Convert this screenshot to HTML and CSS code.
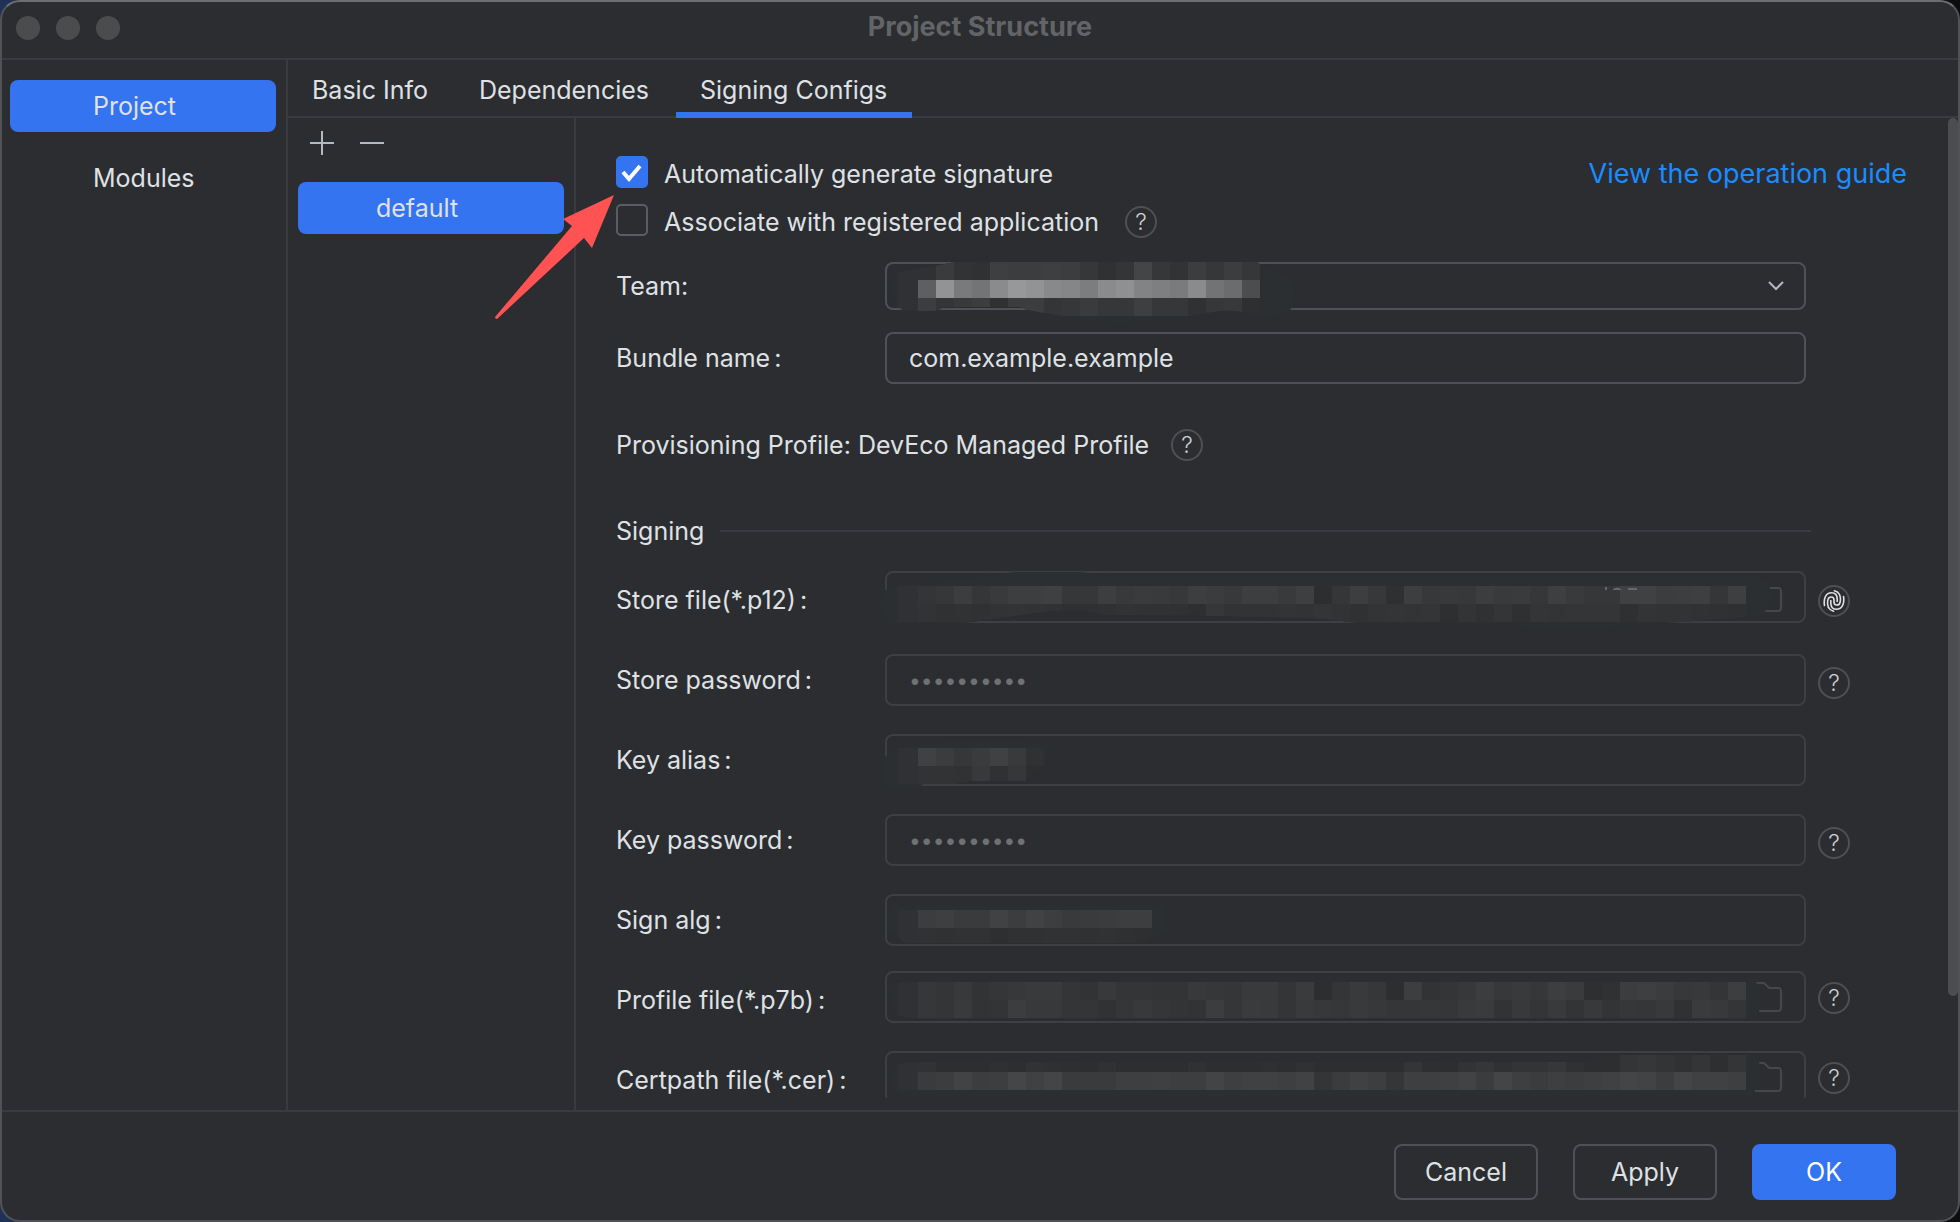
FILE: index.html
```
<!DOCTYPE html>
<html lang="en">
<head>
    <meta charset="UTF-8">
    <meta name="viewport" content="width=device-width, initial-scale=1.0">
    <title>Project Structure</title>
    <link rel="stylesheet" href="styles.css">
</head>
<body>
    <div class="window">
        <header class="titlebar">
            <div class="lights"><span></span><span></span><span></span></div>
            <h1>Project Structure</h1>
        </header>

        <div class="container">
            <nav class="sidebar">
                <button class="nav-item active">Project</button>
                <button class="nav-item">Modules</button>
            </nav>

            <main class="main">
                <div class="tabs">
                    <button class="tab">Basic Info</button>
                    <button class="tab">Dependencies</button>
                    <button class="tab active">Signing Configs</button>
                </div>

                <div class="panes">
                    <div class="config-list">
                        <div class="toolbar">
                            <button class="icon-btn" aria-label="Add">
                                <svg width="24" height="24" viewBox="0 0 24 24"><path d="M12 0v24M0 12h24"/></svg>
                            </button>
                            <button class="icon-btn" aria-label="Remove">
                                <svg width="24" height="24" viewBox="0 0 24 24"><path d="M0 12h24"/></svg>
                            </button>
                        </div>
                        <button class="config active">default</button>
                    </div>

                    <div class="content">
                        <form class="form">
                            <div class="check-row">
                                <input type="checkbox" id="autoSign" checked>
                                <label for="autoSign">Automatically generate signature</label>
                                <a class="guide" href="#">View the operation guide</a>
                            </div>
                            <div class="check-row">
                                <input type="checkbox" id="associate">
                                <label for="associate">Associate with registered application</label>
                                <button type="button" class="help" aria-label="Help">?</button>
                            </div>

                            <div class="row row-team">
                                <label for="team">Team:</label>
                                <div class="field">
                                    <select id="team"><option></option></select>
                                    <svg class="chevron" width="16" height="10" viewBox="0 0 16 10"><path d="M1 1l7 7 7-7"/></svg>
                                    <svg class="mosaic" data-mosaic="team"></svg>
                                </div>
                            </div>
                            <div class="row row-bundle">
                                <label for="bundle">Bundle name<span class="colon">:</span></label>
                                <div class="field">
                                    <input type="text" id="bundle" value="com.example.example">
                                </div>
                            </div>

                            <div class="profile">
                                <span>Provisioning Profile: DevEco Managed Profile</span>
                                <button type="button" class="help" aria-label="Help">?</button>
                            </div>

                            <h2 class="section">Signing</h2>

                            <div class="row row-file">
                                <label for="storeFile">Store file(*.p12)<span class="colon">:</span></label>
                                <div class="field">
                                    <input type="text" id="storeFile" disabled>
                                    <svg class="folder" width="30" height="30" viewBox="0 0 30 30"><path d="M1 4q0-3 3-3h8l5 5h9q3 0 3 3v17q0 3-3 3H4q-3 0-3-3z"/></svg>
                                    <svg class="mosaic" data-mosaic="store"></svg>
                                </div>
                                <button type="button" class="fingerprint" aria-label="Generate key">
                                    <svg width="22" height="22" viewBox="0 0 22 22">
                                        <path d="M5.500 17.500C4.500 15 4.300 12 5 9.500 5.800 6 11 6 11 10v2c0 4 5.200 4 6 .5.700-2.500.5-5.500-.5-8C15.500 2.500 14 1.500 11.500.8"/>
                                        <path d="M1.500 15.500C.3 8 3 2.700 8.500 2.700c4 0 5.700 3 5.700 6.300v2.500"/>
                                        <path d="M20.500 6.500C21.700 14 19 19.300 13.500 19.300c-4 0-5.700-3-5.700-6.300v-2.500"/>
                                        <path d="M5.500 17.500c1 2 2.500 3 5 3.700"/>
                                    </svg>
                                </button>
                            </div>
                            <div class="row">
                                <label for="storePassword">Store password<span class="colon">:</span></label>
                                <div class="field">
                                    <input type="password" id="storePassword" value="0123456789" disabled>
                                </div>
                                <button type="button" class="help" aria-label="Help">?</button>
                            </div>
                            <div class="row">
                                <label for="keyAlias">Key alias<span class="colon">:</span></label>
                                <div class="field">
                                    <input type="text" id="keyAlias" disabled>
                                    <svg class="mosaic" data-mosaic="alias"></svg>
                                </div>
                            </div>
                            <div class="row">
                                <label for="keyPassword">Key password<span class="colon">:</span></label>
                                <div class="field">
                                    <input type="password" id="keyPassword" value="0123456789" disabled>
                                </div>
                                <button type="button" class="help" aria-label="Help">?</button>
                            </div>
                            <div class="row">
                                <label for="signAlg">Sign alg<span class="colon">:</span></label>
                                <div class="field">
                                    <input type="text" id="signAlg" disabled>
                                    <svg class="mosaic" data-mosaic="alg"></svg>
                                </div>
                            </div>
                            <div class="row row-file">
                                <label for="profileFile">Profile file(*.p7b)<span class="colon">:</span></label>
                                <div class="field">
                                    <input type="text" id="profileFile" disabled>
                                    <svg class="folder" width="30" height="30" viewBox="0 0 30 30"><path d="M1 4q0-3 3-3h8l5 5h9q3 0 3 3v17q0 3-3 3H4q-3 0-3-3z"/></svg>
                                    <svg class="mosaic" data-mosaic="profile"></svg>
                                </div>
                                <button type="button" class="help" aria-label="Help">?</button>
                            </div>
                            <div class="row row-file">
                                <label for="certFile">Certpath file(*.cer)<span class="colon">:</span></label>
                                <div class="field">
                                    <input type="text" id="certFile" disabled>
                                    <svg class="folder" width="30" height="30" viewBox="0 0 30 30"><path d="M1 4q0-3 3-3h8l5 5h9q3 0 3 3v17q0 3-3 3H4q-3 0-3-3z"/></svg>
                                    <svg class="mosaic" data-mosaic="cert"></svg>
                                </div>
                                <button type="button" class="help" aria-label="Help">?</button>
                            </div>
                        </form>
                    </div>
                    <div class="scrollbar"></div>
                </div>

                <svg class="arrow" width="122" height="128" viewBox="0 0 122 128">
                    <path d="M120 2L69 26l9 7L1 124q0 2 2 2L90 45l8 10z"/>
                </svg>
            </main>
        </div>

        <footer class="footer">
            <button class="btn">Cancel</button>
            <button class="btn">Apply</button>
            <button class="btn primary">OK</button>
        </footer>
    </div>

    <script>
        // Redacted values: a smear shape, then rows of grey blocks clipped to it
        const mosaics = {
            team: {
                smear: 'M5 28Q6 12 18 9L55 3Q70-1 90-1H370Q385 10 405 16Q412 30 410 38L405 49Q390 55 375 54Q350 46 328 50Q290 58 258 60Q225 62 205 59Q165 52 142 48L136 45H60L50 49H35L18 48Q6 42 5 28Z',
                rows: [
                    [0, [48, 58, 50, 48, 62, 60, 60, 62, 60, 54, 48, 52, 68, 54, 50, 60, 54, 60, 54]],
                    [18, [94, 146, 121, 115, 138, 151, 146, 136, 133, 124, 138, 143, 130, 126, 122, 138, 114, 107, 76]],
                    [36, [60, 52, 56, 60, 48, 60, 60, 52, 54, 58, 54, 54, 62, 54, 54, 48, 54, 56, 46]]
                ]
            },
            store: {
                smear: 'M-4 28Q-4 18 12 15Q80 8 130 1H195L225 5H868Q886 8 887 26Q886 42 868 46L780 52Q700 60 640 56L590 53H480L440 48Q330 44 220 44Q190 36 150 42L80 52H5Q-4 48-4 28Z',
                rows: [
                    [15, [52, 54, 60, 53, 57, 61, 61, 63, 54, 54, 61, 56, 58, 57, 55, 61, 59, 56, 61, 61, 57, 62, 45, 53, 61, 55, 47, 61, 55, 56, 55, 60, 57, 58, 54, 62, 57, 54, 54, 64, 64, 60, 61, 62, 53, 62]],
                    [33, [50, 48, 49, 48, 50, 51, 50, 49, 47, 47, 48, 50, 49, 49, 48, 46, 54, 50, 50, 50, 51, 50, 52, 50, 48, 51, 52, 51, 52, 46, 51, 48, 52, 47, 52, 51, 52, 52, 52, 47, 51, 50, 50, 49, 48, 47]]
                ],
                // letter tops left uncovered above the smear
                specks: 'M720 16h2v3h-2zM728 18q4-3 8 0v1h-8zM743 17h9v2h-9z'
            },
            alias: {
                smear: 'M-3 40V28Q4 16 18 13L60 8H140Q160 6 165 14L158 32L140 47H85L70 50H38Q30 58 10 56Q-2 52-3 40Z',
                rows: [
                    [14, [64, 59, 54, 58, 64, 57, 48]],
                    [32, [50, 50, 49, 56, 48, 54, 45]]
                ]
            },
            alg: {
                smear: 'M3 22L6 12H280V38L260 49H20L3 36Z',
                rows: [
                    [16, [60, 62, 58, 58, 65, 60, 65, 61, 57, 58, 59, 61, 61]],
                    [34, [49, 48, 49, 49, 46, 48, 48, 49, 49, 48, 49, 47, 46]]
                ]
            },
            profile: {
                smear: 'M5 20Q8 11 20 10H870Q876 16 876 28Q875 40 872 47H25Q6 46 5 30Z',
                rows: [
                    [11, [54, 52, 56, 50, 53, 55, 57, 57, 52, 50, 56, 52, 52, 51, 51, 56, 54, 53, 57, 57, 52, 58, 45, 52, 57, 54, 45, 61, 50, 52, 55, 60, 55, 57, 54, 61, 58, 46, 48, 60, 62, 59, 55, 56, 52, 61]],
                    [29, [54, 52, 57, 50, 51, 60, 56, 56, 52, 52, 49, 53, 56, 53, 51, 50, 60, 53, 58, 57, 52, 57, 55, 54, 57, 55, 53, 53, 54, 53, 57, 58, 50, 56, 52, 57, 51, 56, 51, 54, 53, 56, 48, 58, 56, 52]]
                ]
            },
            cert: {
                smear: 'M5 26Q8 12 25 11H700L720 4H868Q876 10 877 24Q876 34 870 38V46H25Q5 44 5 26Z',
                rows: [
                    [3, [49, 45, 45, 45, 47, 45, 49, 47, 46, 45, 48, 45, 45, 45, 45, 48, 45, 45, 45, 47, 45, 48, 45, 45, 45, 45, 45, 52, 46, 45, 50, 53, 48, 51, 51, 54, 48, 45, 45, 52, 54, 51, 48, 52, 46, 52]],
                    [21, [58, 60, 66, 60, 61, 69, 64, 68, 58, 58, 58, 62, 62, 63, 61, 61, 67, 62, 64, 64, 62, 65, 52, 59, 64, 61, 53, 62, 62, 63, 66, 59, 68, 62, 59, 62, 60, 62, 64, 68, 66, 60, 68, 64, 64, 62]]
                ]
            }
        };

        document.querySelectorAll('[data-mosaic]').forEach(svg => {
            const name = svg.dataset.mosaic;
            const { smear, rows, specks = '' } = mosaics[name];
            let blocks = '';
            rows.forEach(([y, greys]) => {
                blocks += `<rect x="13" y="${y}" width="20" height="18" fill="rgb(48,49,52)"/>`;
                greys.forEach((grey, i) => {
                    blocks += `<rect x="${33 + i * 18}" y="${y}" width="18" height="18" fill="rgb(${grey},${grey + 1},${grey + 3})"/>`;
                });
            });
            svg.innerHTML = `<clipPath id="clip-${name}"><path d="${smear}"/></clipPath>
                <path d="${smear}" fill="#2c2f32"/><g clip-path="url(#clip-${name})">${blocks}</g>
                <path d="${specks}" fill="#66686b"/>`;
        });
    </script>
</body>
</html>
```
FILE: styles.css
```
* {
    margin: 0;
    padding: 0;
    box-sizing: border-box;
}

body {
    font-family: Inter, "Liberation Sans", sans-serif;
    font-size: 25px;
    line-height: 32px;
    color: #dfe1e5;
    background: linear-gradient(to right, #1f3157 20px, #0c0d0f 40px);
}

button,
input,
select {
    font: inherit;
    color: inherit;
    background: none;
    border: none;
}

button {
    cursor: pointer;
}

.window {
    display: flex;
    flex-direction: column;
    height: 100vh;
    background-color: #2b2d30;
    border: 2px solid #505255;
    border-top-color: #6c6e71;
    border-radius: 20px;
    overflow: hidden;
}

.titlebar {
    position: relative;
    display: flex;
    align-items: center;
    justify-content: center;
    height: 58px;
    padding-bottom: 6px;
    border-bottom: 2px solid #393b40;
}

.titlebar h1 {
    font-size: 27px;
    font-weight: 700;
    color: #626467;
}

.lights {
    position: absolute;
    left: 14px;
    top: 14px;
    display: flex;
    gap: 16px;
}

.lights span {
    width: 24px;
    height: 24px;
    border-radius: 50%;
    background-color: #4b4c4e;
}

.container {
    display: flex;
    flex: 1;
    min-height: 0;
}

.sidebar {
    display: flex;
    flex-direction: column;
    gap: 20px;
    width: 286px;
    padding: 20px 10px 20px 8px;
    border-right: 2px solid #393b40;
}

.nav-item {
    height: 52px;
    padding-left: 83px;
    border-radius: 8px;
    text-align: left;
}

.active.nav-item,
.active.config {
    background-color: #3574f0;
}

.main {
    position: relative;
    display: flex;
    flex: 1;
    flex-direction: column;
    min-width: 0;
}

.tabs {
    display: flex;
    gap: 2px;
    height: 58px;
    border-bottom: 2px solid #393b40;
}

.tab {
    height: 58px;
    padding: 8px 25px 0 24px;
    border-bottom: 6px solid transparent;
}

.tab.active {
    border-bottom-color: #3574f0;
}

.panes {
    position: relative;
    display: flex;
    flex: 1;
    min-height: 0;
}

.config-list {
    width: 288px;
    padding: 13px 10px;
    border-right: 2px solid #393b40;
}

.toolbar {
    display: flex;
    gap: 26px;
    padding: 0 12px;
}

.icon-btn {
    display: flex;
}

.icon-btn svg {
    fill: none;
    stroke: #b4b8bf;
    stroke-width: 2;
}

.config {
    width: 100%;
    height: 52px;
    margin-top: 27px;
    padding-right: 28px;
    border-radius: 8px;
}

.content {
    flex: 1;
    min-width: 0;
    margin-bottom: 12px;
    padding: 38px 51px 0 40px;
    overflow: hidden;
}

.scrollbar {
    position: absolute;
    top: 0;
    right: 0;
    bottom: 114px;
    width: 10px;
    border-radius: 6px;
    background-color: #4c4d4f;
}

.check-row {
    display: flex;
    align-items: center;
    gap: 16px;
    height: 32px;
    margin-bottom: 16px;
}

.check-row input {
    width: 32px;
    height: 32px;
    appearance: none;
    border: 2px solid #5a5d63;
    border-radius: 5px;
}

.check-row input:checked {
    border-color: #3574f0;
    background: #3574f0 url("data:image/svg+xml,%3Csvg xmlns='http://www.w3.org/2000/svg' viewBox='0 0 28 28'%3E%3Cpath d='M5 14l6 7L22 8' fill='none' stroke='white' stroke-width='4'/%3E%3C/svg%3E") center no-repeat;
}

.check-row label,
.check-row a,
.check-row .help {
    margin-top: 4px;
}

.check-row .guide {
    margin-left: auto;
    font-size: 27px;
    color: #1a8cff;
    text-decoration: none;
}

.row {
    display: flex;
    align-items: center;
    height: 80px;
    margin-right: 57px;
    padding-right: 44px;
}

.row > label {
    width: 269px;
}

.row-team {
    height: 48px;
    margin-top: 26px;
}

.row-bundle {
    height: 52px;
    margin-top: 22px;
}

.colon {
    margin-left: 4px;
}

.field {
    position: relative;
    flex: 1;
    height: 52px;
}

.row-team .field {
    height: 48px;
}

.field input,
.field select {
    width: 100%;
    height: 100%;
    padding: 0 22px;
    appearance: none;
    border: 2px solid #4e5157;
    border-radius: 8px;
}

.field input:disabled {
    color: #6f7174;
    border-color: #3d3f43;
}

.field input[type="password"] {
    font-size: 21px;
}

.row-file .field {
    margin-bottom: 6px;
}

.chevron {
    position: absolute;
    right: 22px;
    top: 19px;
    fill: none;
    stroke: #b4b8bf;
    stroke-width: 2;
}

.folder {
    position: absolute;
    right: 24px;
    top: 11px;
    fill: none;
    stroke: #45474b;
    stroke-width: 2;
}

.mosaic {
    position: absolute;
    left: 0;
    top: 0;
    overflow: visible;
    pointer-events: none;
}

.help,
.fingerprint {
    display: flex;
    align-items: center;
    justify-content: center;
    width: 32px;
    height: 32px;
    border: 2px solid #4e5054;
    border-radius: 50%;
    font-size: 23px;
    font-weight: 300;
    line-height: 28px;
    color: #ced0d6;
}

.check-row .help,
.profile .help {
    margin-left: 10px;
}

.row > button {
    flex-shrink: 0;
    margin: 6px -44px 0 12px;
}

.row-file > .help {
    margin-top: -4px;
}

.row > .fingerprint {
    margin-top: 2px;
}

.fingerprint svg {
    flex-shrink: 0;
    fill: none;
    stroke: #dfe1e5;
    stroke-width: 1.6;
    stroke-linecap: round;
}

.profile {
    display: flex;
    align-items: center;
    gap: 12px;
    margin-top: 45px;
}

.section {
    display: flex;
    align-items: center;
    gap: 16px;
    margin: 54px 96px 13px 0;
    font-size: 25px;
    font-weight: 400;
}

.section::after {
    content: "";
    flex: 1;
    height: 2px;
    background-color: #393b40;
}

.arrow {
    position: absolute;
    left: 206px;
    top: 133px;
    fill: #ff5252;
    pointer-events: none;
}

.footer {
    display: flex;
    justify-content: flex-end;
    gap: 35px;
    padding: 32px 62px 20px;
    border-top: 2px solid #393b40;
}

.btn {
    width: 144px;
    height: 56px;
    border: 2px solid #4e5157;
    border-radius: 8px;
}

.btn.primary {
    border-color: #3574f0;
    background-color: #3574f0;
    color: white;
}
```
